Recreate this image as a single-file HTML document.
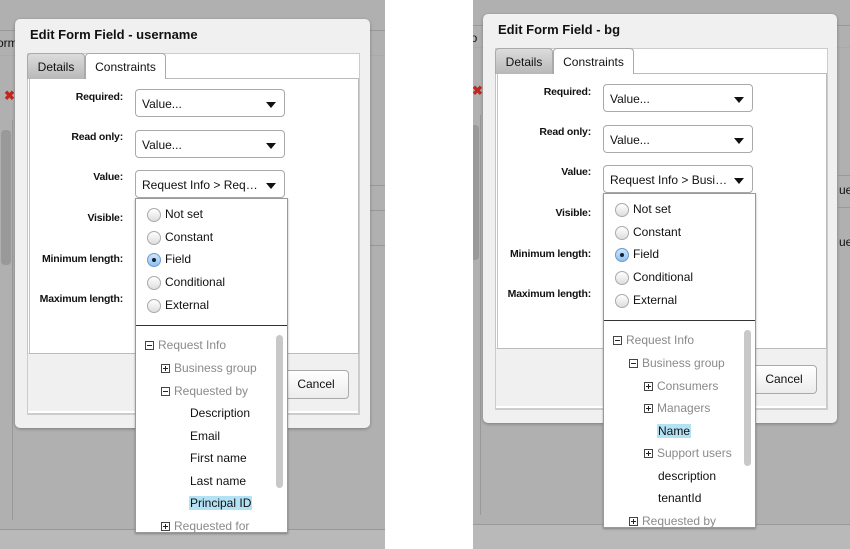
<!DOCTYPE html>
<html><head><style>
*{box-sizing:border-box;margin:0;padding:0}
body{width:850px;height:549px;background:#fff;position:relative;overflow:hidden;font-family:"Liberation Sans",Arial,sans-serif;color:#111}
.clip{position:absolute;top:0;height:549px;overflow:hidden;background:#b0b0b0}
.pane{position:absolute;left:0;width:400px;height:560px}
.a{position:absolute}
.dlg{left:15px;top:19px;width:355px;height:409px;background:#f0f0f0;border-radius:5px;box-shadow:0 1px 3px rgba(0,0,0,.3)}
.title{left:15px;top:8px;font-weight:bold;font-size:13px}
.tab{top:53px;height:26px;font-size:12px;line-height:26px;text-align:center;border:1px solid #aaa;border-bottom:none;border-radius:4px 4px 0 0}
.content{left:27px;top:78px;width:332px;height:276px;border:1px solid #bbb;border-left:3px double #c4c4c4;background:#fff}
.foot{left:27px;top:354px;width:332px;height:60px;background:#f0f0f0;border:1px solid #ccc;border-top:none;box-shadow:inset 0 -2px 0 #fff}
.lbl{font-weight:bold;font-size:10.5px;letter-spacing:-0.2px;width:110px;text-align:right;left:13px}
.sel{left:135px;width:150px;height:28px;border:1px solid #aaa;border-radius:4px;background:#fff;font-size:12px;line-height:28px;padding-left:6px}
.sel:after{content:"";position:absolute;right:8px;top:12px;border-left:5px solid transparent;border-right:5px solid transparent;border-top:6px solid #111}
.pop{left:135px;top:198px;width:153px;height:335px;background:#fff;border:1px solid #999;box-shadow:0 1px 2px rgba(0,0,0,.3)}
.rad{left:11px;font-size:12px}
.rad i{position:absolute;left:0;top:1px;width:14px;height:14px;border-radius:50%;border:1px solid #aaa;background:linear-gradient(#fff,#ddd)}
.rad span{position:absolute;left:18px;top:0;white-space:nowrap}
.rad.on i{background:linear-gradient(#cfe6fb,#8ec1ee);border-color:#6a9bd0}
.rad.on i:after{content:"";position:absolute;left:4px;top:4px;width:4px;height:4px;border-radius:50%;background:#123}
.sep{left:0;top:126px;width:151px;height:1px;background:#333}
.sb{left:140px;width:7px;border-radius:4px;background:#c8c8c8}
.ti{font-size:12px;white-space:nowrap;height:18px;line-height:18px}
.g{color:#8a8a8a}
.ic{display:inline-block;width:9px;height:9px;border:1px solid #444;position:relative;margin-right:4px;vertical-align:-1px;background:#fff}
.ic:before{content:"";position:absolute;left:1px;top:3px;width:5px;height:1px;background:#222}
.ic.p:after{content:"";position:absolute;left:3px;top:1px;width:1px;height:5px;background:#222}
.hl{background:#b4e2f5;padding:0 1px}
.btn{left:283px;top:370px;width:66px;height:29px;border:1px solid #aaa;border-radius:4px;background:linear-gradient(#fff,#ececec);font-size:12px;line-height:27px;text-align:center}
</style></head><body>

<div class="clip" style="left:0;width:385px">
<div class="pane" style="top:0">
 <div class="a" style="left:0;top:30px;width:385px;height:1px;background:#999"></div>
 <div class="a" style="left:0;top:55px;width:385px;height:1px;background:#aaa"></div>
 <div class="a" style="left:-3px;top:36px;font-size:12px">orm</div>
 <div class="a" style="left:4px;top:88px;color:#c0271f;font-weight:bold;font-size:13px">✖</div>
 <div class="a" style="left:1px;top:130px;width:10px;height:135px;background:#999;border-radius:4px"></div>
 <div class="a" style="left:12px;top:120px;width:1px;height:400px;background:#999"></div>
 <div class="a" style="left:370px;top:185px;width:20px;height:1px;background:#999"></div>
 <div class="a" style="left:370px;top:210px;width:20px;height:1px;background:#999"></div>
 <div class="a" style="left:370px;top:245px;width:20px;height:1px;background:#999"></div>
 <div class="a" style="left:0;top:529px;width:400px;height:1px;background:#999"></div>
 <div class="a" style="left:0;top:530px;width:400px;height:20px;background:#b9b9b9"></div>
 <div class="a dlg"><div class="a title">Edit Form Field - username</div></div>
 <div class="a" style="left:27px;top:53px;width:333px;height:362px;background:#fff;border:1px solid #ccc"></div>
 <div class="a content"></div>
 <div class="a foot"></div>
 <div class="a tab" style="left:27px;width:58px;background:linear-gradient(#dcdcdc,#b8b8b8)">Details</div>
 <div class="a tab" style="left:85px;width:81px;background:#fff;height:26px">Constraints</div>
 <div class="a lbl" style="top:91px">Required:</div>
 <div class="a lbl" style="top:131px">Read only:</div>
 <div class="a lbl" style="top:171px">Value:</div>
 <div class="a lbl" style="top:212px">Visible:</div>
 <div class="a lbl" style="top:253px">Minimum length:</div>
 <div class="a lbl" style="top:293px">Maximum length:</div>
 <div class="a sel" style="top:89px">Value...</div>
 <div class="a sel" style="top:130px">Value...</div>
 <div class="a sel" style="top:170px">Request Info &gt; Req…</div>
 <div class="a btn">Cancel</div>
 <div class="a pop">
  <div class="a rad" style="top:8px"><i></i><span>Not set</span></div>
  <div class="a rad" style="top:31px"><i></i><span>Constant</span></div>
  <div class="a rad on" style="top:53px"><i></i><span>Field</span></div>
  <div class="a rad" style="top:76px"><i></i><span>Conditional</span></div>
  <div class="a rad" style="top:99px"><i></i><span>External</span></div>
  <div class="a sep"></div>
  <div class="a sb" style="top:136px;height:153px"></div>
  <div class="a ti g" style="left:9px;top:137px"><span class="ic"></span>Request Info</div>
  <div class="a ti g" style="left:25px;top:160px"><span class="ic p"></span>Business group</div>
  <div class="a ti g" style="left:25px;top:183px"><span class="ic"></span>Requested by</div>
  <div class="a ti" style="left:54px;top:205px">Description</div>
  <div class="a ti" style="left:54px;top:228px">Email</div>
  <div class="a ti" style="left:54px;top:250px">First name</div>
  <div class="a ti" style="left:54px;top:273px">Last name</div>
  <div class="a ti" style="left:53px;top:295px"><span class="hl">Principal ID</span></div>
  <div class="a ti g" style="left:25px;top:318px"><span class="ic p"></span>Requested for</div>
 </div>
</div></div>

<div class="clip" style="left:473px;width:377px">
<div class="pane" style="top:-5px;left:-5px">
 <div class="a" style="left:0;top:30px;width:400px;height:1px;background:#999"></div>
 <div class="a" style="left:0;top:52px;width:400px;height:1px;background:#aaa"></div>
 <div class="a" style="left:0;top:36px;font-size:12px">io</div>
 <div class="a" style="left:4px;top:88px;color:#c0271f;font-weight:bold;font-size:13px">✖</div>
 <div class="a" style="left:1px;top:130px;width:10px;height:135px;background:#999;border-radius:4px"></div>
 <div class="a" style="left:12px;top:120px;width:1px;height:400px;background:#999"></div>
 <div class="a" style="left:370px;top:180px;width:20px;height:1px;background:#999"></div>
 <div class="a" style="left:371px;top:188px;font-size:12px">ue</div>
 <div class="a" style="left:371px;top:240px;font-size:12px">ue</div>
 <div class="a" style="left:370px;top:212px;width:20px;height:1px;background:#999"></div>
 <div class="a" style="left:0;top:529px;width:400px;height:1px;background:#999"></div>
 <div class="a" style="left:0;top:530px;width:400px;height:30px;background:#b9b9b9"></div>
 <div class="a dlg" style="width:354px"><div class="a title">Edit Form Field - bg</div></div>
 <div class="a" style="left:27px;top:53px;width:333px;height:362px;background:#fff;border:1px solid #ccc"></div>
 <div class="a content"></div>
 <div class="a foot"></div>
 <div class="a tab" style="left:27px;width:58px;background:linear-gradient(#dcdcdc,#b8b8b8)">Details</div>
 <div class="a tab" style="left:85px;width:81px;background:#fff">Constraints</div>
 <div class="a lbl" style="top:91px">Required:</div>
 <div class="a lbl" style="top:131px">Read only:</div>
 <div class="a lbl" style="top:171px">Value:</div>
 <div class="a lbl" style="top:212px">Visible:</div>
 <div class="a lbl" style="top:253px">Minimum length:</div>
 <div class="a lbl" style="top:293px">Maximum length:</div>
 <div class="a sel" style="top:89px">Value...</div>
 <div class="a sel" style="top:130px">Value...</div>
 <div class="a sel" style="top:170px">Request Info &gt; Busi…</div>
 <div class="a btn">Cancel</div>
 <div class="a pop">
  <div class="a rad" style="top:8px"><i></i><span>Not set</span></div>
  <div class="a rad" style="top:31px"><i></i><span>Constant</span></div>
  <div class="a rad on" style="top:53px"><i></i><span>Field</span></div>
  <div class="a rad" style="top:76px"><i></i><span>Conditional</span></div>
  <div class="a rad" style="top:99px"><i></i><span>External</span></div>
  <div class="a sep"></div>
  <div class="a sb" style="top:136px;height:136px"></div>
  <div class="a ti g" style="left:9px;top:137px"><span class="ic"></span>Request Info</div>
  <div class="a ti g" style="left:25px;top:160px"><span class="ic"></span>Business group</div>
  <div class="a ti g" style="left:40px;top:183px"><span class="ic p"></span>Consumers</div>
  <div class="a ti g" style="left:40px;top:205px"><span class="ic p"></span>Managers</div>
  <div class="a ti" style="left:53px;top:228px"><span class="hl">Name</span></div>
  <div class="a ti g" style="left:40px;top:250px"><span class="ic p"></span>Support users</div>
  <div class="a ti" style="left:54px;top:273px">description</div>
  <div class="a ti" style="left:54px;top:295px">tenantId</div>
  <div class="a ti g" style="left:25px;top:318px"><span class="ic p"></span>Requested by</div>
 </div>
</div></div>
</body></html>
